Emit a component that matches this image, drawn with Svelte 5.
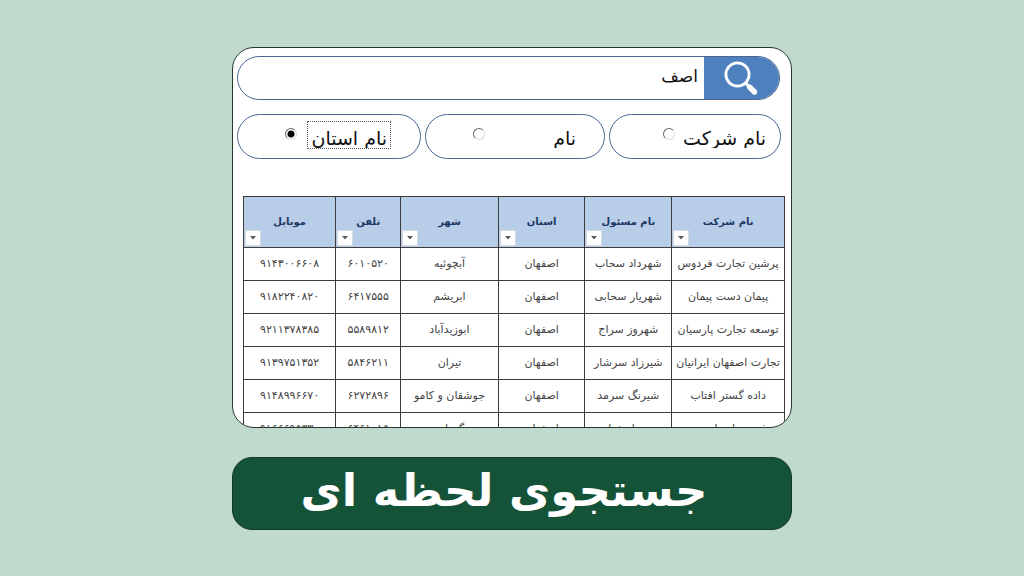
<script lang="ts">
interface Company {
  name: string;
  contact: string;
  province: string;
  city: string;
  phone: string;
  mobile: string;
}

const columns: { key: keyof Company; label: string }[] = [
  { key: 'name', label: 'نام شرکت' },
  { key: 'contact', label: 'نام مسئول' },
  { key: 'province', label: 'استان' },
  { key: 'city', label: 'شهر' },
  { key: 'phone', label: 'تلفن' },
  { key: 'mobile', label: 'موبایل' },
];

const companies: Company[] = [
  { name: 'پرشین تجارت فردوس', contact: 'شهرداد سحاب', province: 'اصفهان', city: 'آبچوئیه', phone: '۶۰۱۰۵۲۰', mobile: '۹۱۴۳۰۰۶۶۰۸' },
  { name: 'پیمان دست پیمان', contact: 'شهریار سحابی', province: 'اصفهان', city: 'ابریشم', phone: '۶۴۱۷۵۵۵', mobile: '۹۱۸۲۲۴۰۸۲۰' },
  { name: 'توسعه تجارت پارسیان', contact: 'شهروز سراج', province: 'اصفهان', city: 'ابوزیدآباد', phone: '۵۵۸۹۸۱۲', mobile: '۹۲۱۱۳۷۸۳۸۵' },
  { name: 'تجارت اصفهان ایرانیان', contact: 'شیرزاد سرشار', province: 'اصفهان', city: 'تیران', phone: '۵۸۴۶۲۱۱', mobile: '۹۱۳۹۷۵۱۳۵۲' },
  { name: 'داده گستر افتاب', contact: 'شیرنگ سرمد', province: 'اصفهان', city: 'جوشقان و کامو', phone: '۶۲۷۲۸۹۶', mobile: '۹۱۴۸۹۹۶۶۷۰' },
  { name: 'شهر سازه ایده نو', contact: 'حمید اصفهانی', province: 'اصفهان', city: 'گرداب', phone: '۶۴۶۱۰۱۵', mobile: '۹۱۶۶۶۹۵۳۳۰' },
];

const fields = [
  { value: 'company', label: 'نام شرکت' },
  { value: 'person', label: 'نام' },
  { value: 'province', label: 'نام استان' },
];

let query = $state('اصف');
let field = $state('province');
</script>

<main class="page" dir="rtl" lang="fa">
  <section class="sheet">
    <form class="search" role="search" onsubmit={(e) => e.preventDefault()}>
      <button type="submit" class="search-btn" aria-label="جستجو">
        <svg viewBox="0 0 36 36" width="36" height="36" aria-hidden="true">
          <circle cx="13.500" cy="14.500" r="11.600" fill="none" stroke="#fff" stroke-width="2.800" />
          <path d="M21.500 23l3 3" stroke="#fff" stroke-width="2.800" />
          <path d="M24.500 26l2.500 2.500" stroke="#fff" stroke-width="4" stroke-linecap="round" />
          <path d="M26 27.500l4.500 4.500" stroke="#fff" stroke-width="5.400" stroke-linecap="round" />
        </svg>
      </button>
      <input type="text" class="search-input" aria-label="جستجو" bind:value={query} />
    </form>

    <div class="options" role="radiogroup">
      {#each fields as f (f.value)}
        <label class="option {f.value}">
          <span class="option-text" class:active={field === f.value}>{f.label}</span>
          <input type="radio" name="field" value={f.value} bind:group={field} />
        </label>
      {/each}
    </div>

    <table>
      <colgroup>
        {#each columns as col (col.key)}
          <col class="col-{col.key}" />
        {/each}
      </colgroup>
      <thead>
        <tr>
          {#each columns as col (col.key)}
            <th scope="col">
              {col.label}
              <button type="button" class="filter" aria-label={col.label}>
                <svg viewBox="0 0 8 4" width="8" height="4" aria-hidden="true"><path d="M1 0h6L4 3.500z" fill="#555b63" /></svg>
              </button>
            </th>
          {/each}
        </tr>
      </thead>
      <tbody>
        {#each companies as row (row.mobile)}
          <tr>
            {#each columns as col (col.key)}
              <td>{row[col.key]}</td>
            {/each}
          </tr>
        {/each}
      </tbody>
    </table>
  </section>

  <h1 class="banner">جستجوی لحظه ای</h1>
</main>

<style>
  :global(body) { margin: 0; background: #c0dace; }

  .page {
    box-sizing: border-box;
    height: 100vh;
    max-width: 560px;
    margin: 0 auto;
    padding: 47px 0 46px;
    display: flex;
    flex-direction: column;
    gap: 29px;
    font-family: 'DejaVu Sans', sans-serif;
  }
  .sheet {
    flex: 1;
    min-height: 0;
    box-sizing: border-box;
    overflow: hidden;
    padding: 8px 6px 0 4px;
    border: 1px solid #26382f;
    border-radius: 22px;
    background: #fff;
  }

  .search {
    display: flex;
    height: 42px;
    margin-right: 5px;
    border: 1px solid #496795;
    border-radius: 22px;
    overflow: hidden;
  }
  .search-btn {
    display: flex;
    align-items: center;
    justify-content: center;
    width: 75px;
    padding: 0;
    border: 0;
    background: #4e80be;
    cursor: pointer;
  }
  .search-input {
    flex: 1;
    min-width: 0;
    padding: 0 6px 4px 16px;
    border: 0;
    outline: none;
    background: transparent;
    color: #111;
    font: 17px 'DejaVu Sans', sans-serif;
  }

  .options {
    display: grid;
    grid-template-columns: 172fr 180fr 184fr;
    column-gap: 4px;
    margin: 14px 4px 0 0;
  }
  .option {
    box-sizing: border-box;
    height: 45px;
    display: flex;
    align-items: flex-start;
    gap: 4px;
    padding: 6px 10px 0;
    border: 1px solid #496795;
    border-radius: 23px;
    cursor: pointer;
  }
  .option.person { gap: 64px; padding-right: 24px; }
  .option.province { gap: 10px; padding-right: 29px; }
  .option-text {
    height: 26px;
    overflow: hidden;
    padding: 0 3px;
    border: 1px solid transparent;
    color: #111;
    font-size: 19px;
    line-height: 32px;
    white-space: nowrap;
  }
  .option-text.active { border: 1px dotted #555; }
  .option input {
    appearance: none;
    box-sizing: border-box;
    width: 12px;
    height: 12px;
    margin: 7px 0 0;
    border: 1px solid;
    border-color: #666 #ddd #ddd #666;
    border-radius: 50%;
    background: #fff;
  }
  .option input:checked { background: radial-gradient(circle, #000 3px, #fff 4px); }

  table {
    width: 100%;
    margin-top: 37px;
    padding-left: 6px;
    border-collapse: separate;
    border-spacing: 0;
    table-layout: fixed;
  }
  .col-name { width: 21%; }
  .col-contact { width: 16%; }
  .col-province { width: 16%; }
  .col-city { width: 18%; }
  .col-phone { width: 12%; }
  .col-mobile { width: 17%; }
  th, td {
    box-sizing: border-box;
    padding: 0 0 2px;
    border: solid #3c3c3c;
    border-width: 0 0 1px 1px;
    text-align: center;
    white-space: nowrap;
  }
  th:first-child, td:first-child { border-right-width: 1px; }
  th {
    position: relative;
    height: 52px;
    border-top-width: 1px;
    background: #b8cde7;
    color: #1d3765;
    font-size: 10px;
    font-weight: 700;
  }
  td {
    height: 33px;
    color: #444;
    font-size: 11px;
  }
  .filter {
    position: absolute;
    bottom: 1px;
    left: 1px;
    display: flex;
    align-items: center;
    justify-content: center;
    width: 16px;
    height: 16px;
    padding: 0;
    border: 1px solid #d5dbe5;
    background: #fff;
  }

  .banner {
    box-sizing: border-box;
    height: 73px;
    margin: 0;
    padding-right: 16px;
    border: 1px solid #103b28;
    border-radius: 20px;
    background: #155339;
    color: #fff;
    font-size: 45px;
    font-weight: 700;
    line-height: 66px;
    text-align: center;
    white-space: nowrap;
  }
</style>
